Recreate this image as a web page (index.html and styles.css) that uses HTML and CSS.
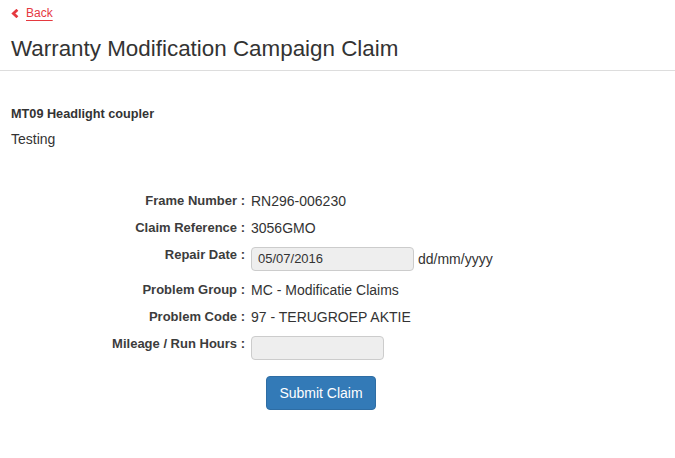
FILE: index.html
```html
<!DOCTYPE html>
<html>
<head>
<meta charset="utf-8">
<link rel="stylesheet" href="styles.css">
</head>
<body>
<header class="page-header">
  <a class="back" href="#"><svg class="chev" width="8" height="9" viewBox="0 0 8 9"><path d="M6.4 0.8 L2.4 4.5 L6.4 8.2" fill="none" stroke="#e5393f" stroke-width="2.8"/></svg><span class="back-text">Back</span></a>
  <h1 class="title">Warranty Modification Campaign Claim</h1>
</header>
<main class="content">
  <div class="campaign-name">MT09 Headlight coupler</div>
  <div class="campaign-desc">Testing</div>
  <form class="claim-form">
    <div class="label">Frame Number :</div>
    <div class="value">RN296-006230</div>
    <div class="label">Claim Reference :</div>
    <div class="value">3056GMO</div>
    <div class="label">Repair Date :</div>
    <div class="value field-row"><input class="input date" type="text" value="05/07/2016"><span class="hint">dd/mm/yyyy</span></div>
    <div class="label">Problem Group :</div>
    <div class="value">MC - Modificatie Claims</div>
    <div class="label">Problem Code :</div>
    <div class="value">97 - TERUGROEP AKTIE</div>
    <div class="label">Mileage / Run Hours :</div>
    <div class="value field-row"><input class="input mileage" type="text" value=""></div>
    <div class="label"></div>
    <div class="value"><button class="btn" type="button">Submit Claim</button></div>
  </form>
</main>
</body>
</html>
```
FILE: styles.css
```css
html, body {
  margin: 0;
  padding: 0;
  background: #fff;
}
body {
  font-family: "Liberation Sans", Arial, sans-serif;
  font-size: 14px;
  color: #333;
}
.page-header {
  padding: 6px 11px 8px;
  border-bottom: 1px solid #ddd;
}
.back {
  display: flex;
  align-items: center;
  gap: 7px;
  height: 15px;
  line-height: 15px;
  font-size: 12px;
  color: #e5393f;
  text-decoration: none;
  width: max-content;
}
.chev {
  display: block;
  margin-top: -1px;
}
.back-text {
  text-decoration: underline;
  text-underline-offset: 3px;
  text-decoration-thickness: 1px;
}
.title {
  margin: 16px 0 0;
  font-size: 22.4px;
  font-weight: normal;
  line-height: 1.1;
  color: #333;
}
.content {
  padding: 33px 11px 0;
}
.campaign-name {
  font-weight: bold;
  font-size: 12.7px;
  line-height: 20px;
  margin-bottom: 5px;
}
.campaign-desc {
  line-height: 20px;
}
.claim-form {
  margin-top: 42px;
  display: grid;
  grid-template-columns: 234px 1fr;
  column-gap: 6px;
}
.label {
  text-align: right;
  font-weight: bold;
  font-size: 13px;
  line-height: 20px;
  color: #3c3c3c;
  margin-bottom: 7px;
}
.value {
  font-size: 14px;
  line-height: 20px;
  margin-bottom: 7px;
}
.field-row {
  display: flex;
  align-items: flex-start;
  gap: 4px;
  padding-top: 2px;
  margin-bottom: 9px;
}
.input {
  box-sizing: border-box;
  height: 24px;
  border: 1px solid #ccc;
  border-radius: 4px;
  background: #eee;
  padding: 0 6px;
  font-family: "Liberation Sans", Arial, sans-serif;
  font-size: 13px;
  color: #333;
  margin: 0;
}
.date {
  width: 163px;
}
.mileage {
  width: 133px;
}
.hint {
  font-size: 14px;
  line-height: 24px;
}
.btn {
  margin-top: 7px;
  margin-left: 15px;
  box-sizing: border-box;
  width: 110px;
  height: 34px;
  background: #337ab7;
  border: 1px solid #2e6da4;
  border-radius: 4px;
  color: #fff;
  font-family: "Liberation Sans", Arial, sans-serif;
  font-size: 14px;
  padding: 0;
}
```
